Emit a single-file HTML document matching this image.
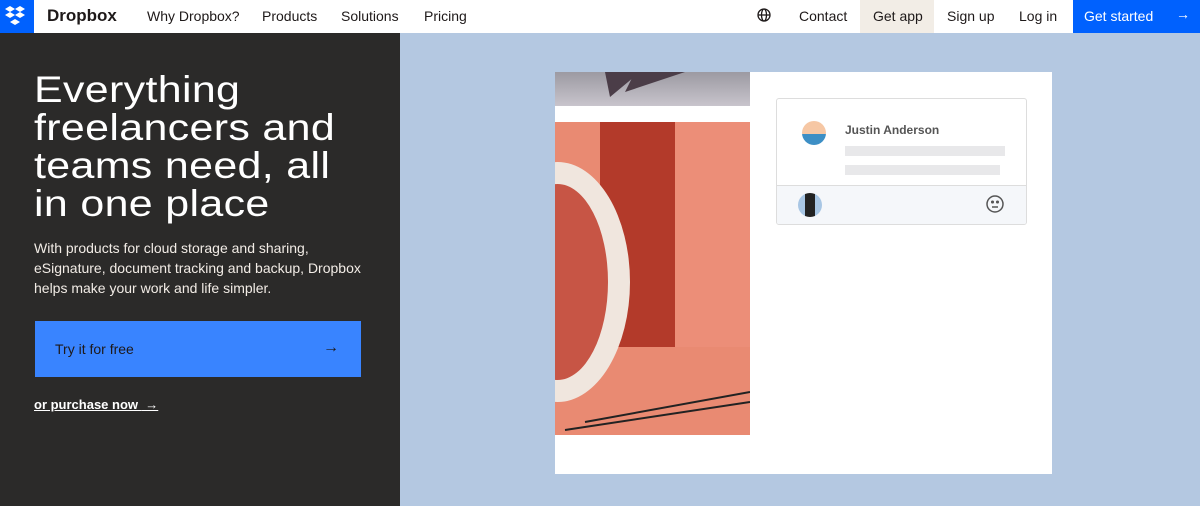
<!DOCTYPE html>
<html><head><style>
*{margin:0;padding:0;box-sizing:border-box}
body{width:1200px;height:506px;overflow:hidden;font-family:"Liberation Sans",sans-serif;background:#b4c8e1;position:relative}
.nav{position:absolute;top:0;left:0;width:1200px;height:33px;background:#fff;font-size:14px;color:#1e1919}
.nav span{position:absolute;top:8px}
.logo{position:absolute;left:0;top:0;width:34px;height:33px;background:#0061fe}
.left{position:absolute;left:0;top:33px;width:400px;height:473px;background:#2b2a29;color:#fff}
h1{position:absolute;left:34px;top:38px;font-size:37px;line-height:38px;font-weight:normal;letter-spacing:0.3px;transform:scaleX(1.16);transform-origin:0 0;white-space:nowrap}
p.d{position:absolute;left:34px;top:205px;font-size:14px;line-height:20px;color:#f2ece6}
.btn{position:absolute;left:35px;top:288px;width:326px;height:56px;background:#3984ff;color:#1e1919;font-size:14px;padding:20px 20px}
.pur{position:absolute;left:34px;top:364px;font-size:13px;font-weight:bold;text-decoration:underline}
.card{position:absolute;left:555px;top:72px;width:497px;height:402px;background:#fff}
</style></head><body>
<div class="nav">
<div class="logo"><svg width="34" height="33" viewBox="0 0 34 33"><g fill="#fff"><path d="M10 6l5 3-5 3-5-3z"/><path d="M20 6l5 3-5 3-5-3z"/><path d="M10 12l5 3-5 3-5-3z"/><path d="M20 12l5 3-5 3-5-3z"/><path d="M15 19l5 3-5 3-5-3z"/></g></svg></div>
<span style="left:47px;top:6px;font-size:17px;font-weight:bold">Dropbox</span>
<span style="left:147px">Why Dropbox?</span>
<span style="left:262px">Products</span>
<span style="left:341px">Solutions</span>
<span style="left:424px">Pricing</span>
<span style="left:757px;top:8px"><svg width="14" height="14" viewBox="0 0 14 14" fill="none" stroke="#1e1919" stroke-width="1.3"><circle cx="7" cy="7" r="6"/><ellipse cx="7" cy="7" rx="2.5" ry="6"/><path d="M1 7h12"/></svg></span>
<span style="left:799px">Contact</span>
<div style="position:absolute;left:860px;top:0;width:74px;height:33px;background:#f2ede6"></div>
<span style="left:873px">Get app</span>
<span style="left:947px">Sign up</span>
<span style="left:1019px">Log in</span>
<div style="position:absolute;left:1073px;top:0;width:127px;height:33px;background:#0061fe"></div>
<span style="left:1084px;color:#fff">Get started</span>
<span style="left:1176px;top:6px;color:#fff">→</span>
</div>
<div class="left">
<h1>Everything<br>freelancers and<br>teams need, all<br>in one place</h1>
<p class="d">With products for cloud storage and sharing,<br>eSignature, document tracking and backup, Dropbox<br>helps make your work and life simpler.</p>
<div class="btn">Try it for free<span style="position:absolute;right:22px;top:18px;font-size:16px">→</span></div>
<div class="pur">or purchase now <span style="text-decoration:none;font-weight:normal">&nbsp;→</span></div>
</div>
<div class="card">
<div style="position:absolute;left:0;top:0;width:195px;height:34px;background:linear-gradient(#9c9aa2,#c8c4cc)"></div>
<svg style="position:absolute;left:40px;top:0" width="100" height="30"><path d="M10 0L45 0 15 25z M40 0L90 0 30 20z" fill="#4b3d48"/></svg>
<div style="position:absolute;left:0;top:50px;width:195px;height:313px;background:#e98a72;overflow:hidden">
<div style="position:absolute;left:45px;top:0;width:75px;height:225px;background:#b33a2a"></div>
<div style="position:absolute;left:120px;top:0;width:75px;height:225px;background:#ec8e78"></div>
<div style="position:absolute;left:-70px;top:40px;width:145px;height:240px;border-radius:50%;border:22px solid #f0e6de;background:#c75545"></div>
<svg style="position:absolute;left:0;top:230px" width="195" height="83"><path d="M30 70L195 40M10 78L195 50" stroke="#222" stroke-width="2"/></svg>
</div>
<div style="position:absolute;left:221px;top:26px;width:251px;height:127px;border:1px solid #ddd;border-radius:3px;overflow:hidden">
<div style="position:absolute;left:25px;top:22px;width:24px;height:24px;border-radius:50%;background:linear-gradient(#f6c7a4 55%,#3d8fc5 55%)"></div>
<div style="position:absolute;left:68px;top:24px;font-size:12px;font-weight:bold;color:#555">Justin Anderson</div>
<div style="position:absolute;left:68px;top:47px;width:160px;height:10px;background:#e8e8ea"></div>
<div style="position:absolute;left:68px;top:66px;width:155px;height:10px;background:#e8e8ea"></div>
<div style="position:absolute;left:0;top:86px;width:249px;height:39px;background:#f5f7fa;border-top:1px solid #ddd">
<div style="position:absolute;left:21px;top:7px;width:24px;height:24px;border-radius:50%;background:linear-gradient(90deg,#a8c6e4 30%,#222 30%,#222 70%,#a8c6e4 70%)"></div>
<svg style="position:absolute;left:208px;top:8px" width="20" height="20" fill="none" stroke="#555" stroke-width="1.5"><circle cx="10" cy="10" r="8"/><circle cx="7.5" cy="8" r=".8" fill="#555"/><circle cx="12.5" cy="8" r=".8" fill="#555"/><path d="M7 13h6"/></svg>
</div></div>
</div>
</body></html>
